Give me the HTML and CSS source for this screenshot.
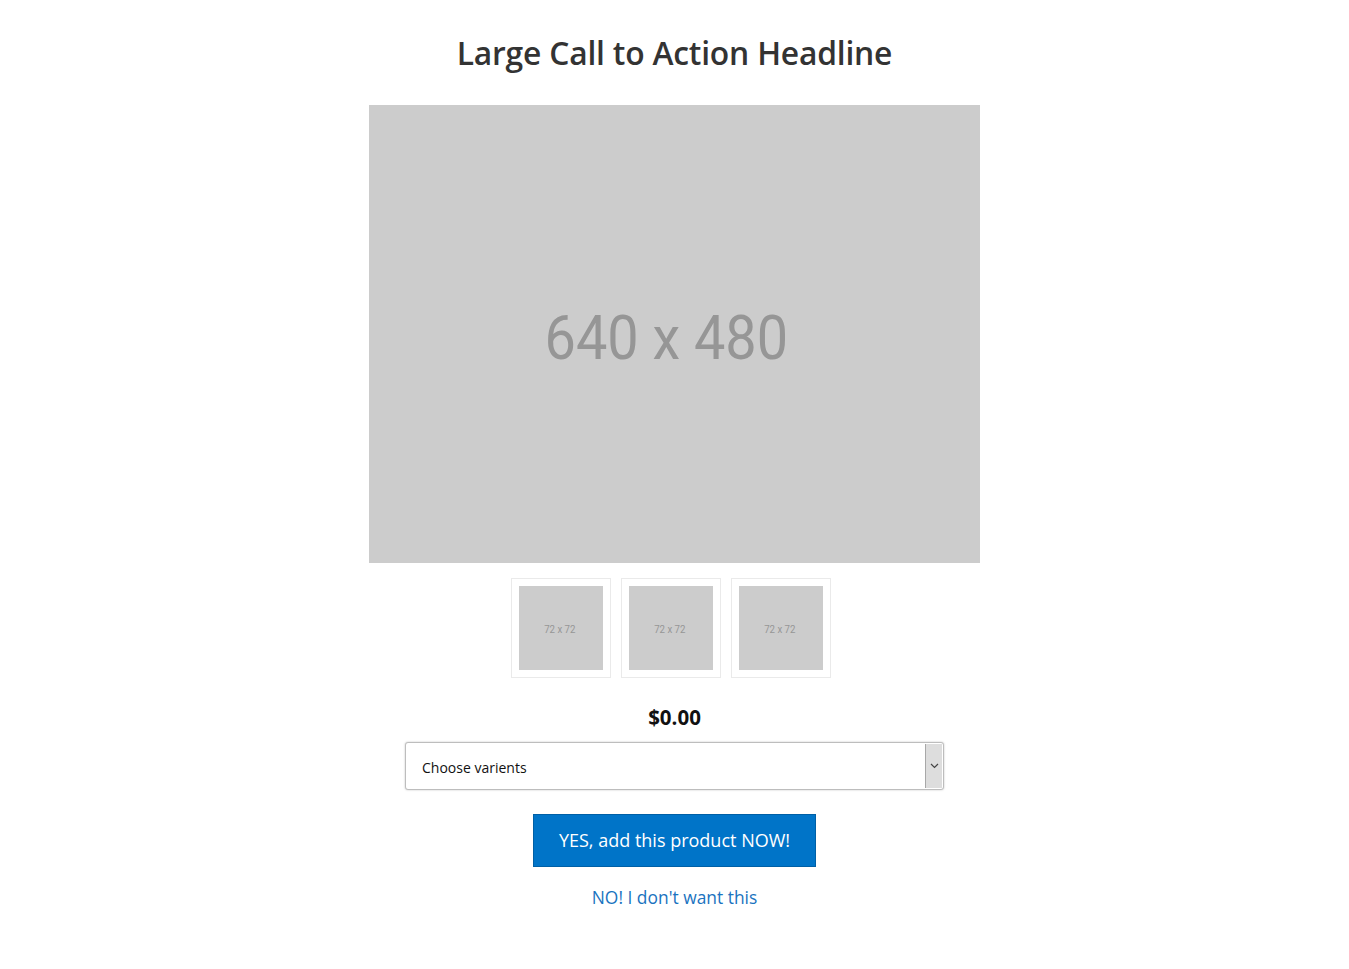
FILE: index.html
```html
<!DOCTYPE html>
<html>
<head>
<meta charset="utf-8">
<link rel="stylesheet" href="styles.css">
</head>
<body>
<main class="page">
  <h1 class="headline">Large Call to Action Headline</h1>
  <div class="hero"><span class="hero-label">640 x 480</span></div>
  <div class="thumbs">
    <div class="thumb"><div class="thumb-img"><span>72 x 72</span></div></div>
    <div class="thumb"><div class="thumb-img"><span>72 x 72</span></div></div>
    <div class="thumb"><div class="thumb-img"><span>72 x 72</span></div></div>
  </div>
  <div class="price">$0.00</div>
  <div class="select">
    <span class="select-text">Choose varients</span>
    <span class="select-arrow"><svg width="9" height="6" viewBox="0 0 9 6"><path d="M1 1 L4.5 4.5 L8 1" fill="none" stroke="#444" stroke-width="1.2"/></svg></span>
  </div>
  <button class="yes">YES, add this product NOW!</button>
  <a class="no" href="#">NO! I don't want this</a>
</main>
</body>
</html>
```
FILE: styles.css
```css
html, body { margin: 0; padding: 0; background: #fff; }
body { font-family: "Open Sans", "Lato", sans-serif; }
.page {
  display: flex;
  flex-direction: column;
  align-items: center;
  padding-top: 33px;
}
.headline {
  margin: 0;
  font-family: "Open Sans", sans-serif;
  font-weight: 600;
  font-size: 31.8px;
  line-height: 40px;
  padding-bottom: 2px;
  color: #333;
  letter-spacing: -0.2px;
}
.hero {
  margin-top: 30px;
  width: 611px;
  height: 458px;
  background: #cccccc;
  display: flex;
  align-items: center;
  justify-content: center;
}
.hero-label {
  font-family: "Roboto", sans-serif;
  font-size: 62px;
  color: #969696;
  display: inline-block;
  transform: scaleX(0.9);
  white-space: nowrap;
  margin-right: 16px;
  padding-top: 6px;
}
.thumbs {
  display: flex;
  gap: 10px;
  margin-top: 15px;
  margin-left: -7px;
}
.thumb {
  width: 84px;
  height: 84px;
  padding: 7px;
  border: 1px solid #eaeaea;
}
.thumb-img {
  width: 84px;
  height: 84px;
  background: #cccccc;
  display: flex;
  align-items: center;
  justify-content: center;
}
.thumb-img span {
  font-family: "Roboto", sans-serif;
  font-size: 11px;
  color: #969696;
  display: inline-block;
  transform: scaleX(0.88);
  margin-right: 3px;
  padding-top: 3px;
}
.price {
  margin-top: 25px;
  font-weight: 700;
  font-size: 20.5px;
  color: #111;
  line-height: 28px;
}
.select {
  margin-top: 11px;
  width: 537px;
  height: 46px;
  border: 1px solid #bdbdbd;
  border-radius: 3px;
  box-shadow: 0 0 2px rgba(0,0,0,0.25);
  display: flex;
  align-items: center;
  justify-content: space-between;
  background: #fff;
  overflow: hidden;
}
.select-text {
  padding-left: 16px;
  padding-top: 2px;
  font-size: 14px;
  color: #111;
}
.select-arrow {
  width: 16px;
  height: 44px;
  margin-right: 1px;
  background: #dddddd;
  border-left: 1px solid #a8a8a8;
  display: flex;
  align-items: center;
  justify-content: center;
}
.yes {
  margin-top: 24px;
  width: 283px;
  height: 53px;
  padding-bottom: 3px;
  background: #0074c8;
  border: 1px solid #0060a6;
  color: #fff;
  font-family: "Open Sans", sans-serif;
  font-size: 18px;
  font-weight: 500;
  cursor: pointer;
}
.no {
  margin-top: 18px;
  font-size: 17.4px;
  color: #1a73c0;
  text-decoration: none;
  line-height: 24px;
}
```
